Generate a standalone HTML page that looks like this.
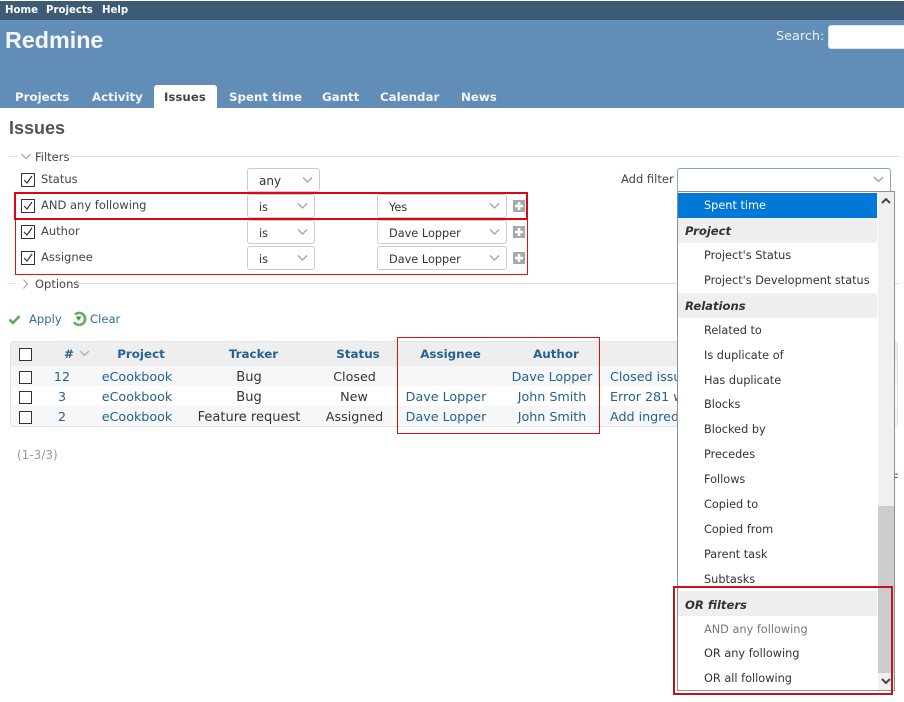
<!DOCTYPE html>
<html><head><meta charset="utf-8"><title>Redmine</title>
<style>
html,body{margin:0;padding:0;background:#fff}
body{width:904px;height:702px;overflow:hidden;position:relative;font-family:"DejaVu Sans","Liberation Sans",sans-serif;font-size:12px;color:#333}
#p{position:absolute;left:0;top:0;width:904px;height:702px;overflow:hidden}
#p div,#p span,#p svg{position:absolute}
.t{white-space:nowrap;line-height:20px;height:20px}
.c{transform:translateX(-50%)}
.tb{font-weight:bold;color:#f2f6fa;font-size:11.8px;top:87px}
.top{font-weight:bold;color:#fff;font-size:10.2px}
.lb{font-size:11.5px;color:#444}
.sel{box-sizing:border-box;border:1px solid #ccc;border-radius:3px;background:#fff;height:24px}
.v{font-size:11.3px;color:#333}
.l{font-size:12.7px;color:#26618f}
.n{font-size:13px;color:#333}
.h{font-size:11.9px;font-weight:bold;color:#26618f}
.cb{box-sizing:border-box;width:13px;height:13px;border:1px solid #333;background:#fff}
.m{font-size:11.3px;color:#333}
.g{font-size:11.6px;font-weight:bold;font-style:italic;color:#333;left:685px}
.gb{left:678px;width:199px;height:25px;background:#efefef}
</style></head><body><div id="p">

<div style="left:0;top:0;width:904px;height:108px;background:#628db6"></div>
<div style="left:0;top:0;width:904px;height:20px;background:#3e5b76"></div>
<div style="left:0;top:0;width:904px;height:1px;background:#fff"></div>
<span class="t top" style="left:5px;top:1px">Home</span>
<span class="t top" style="left:46px;top:1px">Projects</span>
<span class="t top" style="left:102px;top:1px">Help</span>
<span class="t" style="left:5px;top:29px;font:bold 23.300px/22px 'Liberation Sans',sans-serif;height:22px;color:#f4f8fb">Redmine</span>
<span class="t" style="left:776px;top:27px;font-size:12.800px;color:#e8eff5">Search:</span>
<div style="left:828px;top:25px;width:80px;height:24px;background:#fff;border-radius:3px;box-sizing:border-box;border:1px solid #d7e2ec"></div>

<div style="left:154px;top:85px;width:63px;height:23px;background:#fff;border-radius:3px 3px 0 0"></div>
<span class="t tb" style="left:15px">Projects</span>
<span class="t tb" style="left:92px">Activity</span>
<span class="t tb" style="left:164px;color:#444">Issues</span>
<span class="t tb" style="left:229px">Spent time</span>
<span class="t tb" style="left:322px">Gantt</span>
<span class="t tb" style="left:380px">Calendar</span>
<span class="t tb" style="left:461px">News</span>

<span class="t" style="left:9px;top:118px;font:bold 18px/20px 'Liberation Sans',sans-serif;color:#555">Issues</span>

<div style="left:9px;top:156px;width:890px;height:1px;background:#ddd"></div>
<div style="left:18px;top:150px;width:53px;height:14px;background:#fff"></div>
<svg style="left:21px;top:153px" width="10" height="7" viewBox="0 0 10 7"><path d="M.5 1l4.500 4.500L9.500 1" fill="none" stroke="#aaa" stroke-width="1.300"/></svg>
<span class="t lb" style="left:35px;top:147px">Filters</span>

<svg style="left:21px;top:173px" width="14" height="14" viewBox="0 0 14 14"><rect x=".5" y=".5" width="13" height="13" fill="#fff" stroke="#333"/><path d="M3 7l3 3 5-7" fill="none" stroke="#333" stroke-width="1.200"/></svg>
<svg style="left:21px;top:199px" width="14" height="14" viewBox="0 0 14 14"><rect x=".5" y=".5" width="13" height="13" fill="#fff" stroke="#333"/><path d="M3 7l3 3 5-7" fill="none" stroke="#333" stroke-width="1.200"/></svg>
<svg style="left:21px;top:225px" width="14" height="14" viewBox="0 0 14 14"><rect x=".5" y=".5" width="13" height="13" fill="#fff" stroke="#333"/><path d="M3 7l3 3 5-7" fill="none" stroke="#333" stroke-width="1.200"/></svg>
<svg style="left:21px;top:251px" width="14" height="14" viewBox="0 0 14 14"><rect x=".5" y=".5" width="13" height="13" fill="#fff" stroke="#333"/><path d="M3 7l3 3 5-7" fill="none" stroke="#333" stroke-width="1.200"/></svg>
<span class="t lb" style="left:41px;top:169px">Status</span>
<span class="t lb" style="left:41px;top:195px">AND any following</span>
<span class="t lb" style="left:41px;top:221px">Author</span>
<span class="t lb" style="left:41px;top:247px">Assignee</span>

<div class="sel" style="left:247px;top:168px;width:73px"></div>
<div class="sel" style="left:247px;top:194px;width:68px"></div>
<div class="sel" style="left:247px;top:220px;width:68px"></div>
<div class="sel" style="left:247px;top:246px;width:68px"></div>
<div class="sel" style="left:377px;top:194px;width:130px"></div>
<div class="sel" style="left:377px;top:220px;width:130px"></div>
<div class="sel" style="left:377px;top:246px;width:130px"></div>
<span class="t v" style="left:259px;top:171px;font-size:12px">any</span>
<span class="t v" style="left:259px;top:198px">is</span>
<span class="t v" style="left:259px;top:224px">is</span>
<span class="t v" style="left:259px;top:250px">is</span>
<span class="t v" style="left:389px;top:198px">Yes</span>
<span class="t v" style="left:389px;top:224px">Dave Lopper</span>
<span class="t v" style="left:389px;top:250px">Dave Lopper</span>
<svg style="left:0;top:0" width="904" height="300" viewBox="0 0 904 300"><path d="M303 177.500l4.500 4.500 4.500-4.500M298 203.500l4.500 4.500 4.500-4.500M298 229.500l4.500 4.500 4.500-4.500M298 255.500l4.500 4.500 4.500-4.500M490 203.500l4.500 4.500 4.500-4.500M490 229.500l4.500 4.500 4.500-4.500M490 255.500l4.500 4.500 4.500-4.500" fill="none" stroke="#a5a5a5" stroke-width="1.400"/></svg>

<svg style="left:513px;top:200px" width="12" height="12" viewBox="0 0 12 12"><rect width="12" height="12" fill="#a8a8a8"/><path d="M6 2v8M2 6h8" stroke="#fff" stroke-width="2.600"/></svg>
<svg style="left:513px;top:226px" width="12" height="12" viewBox="0 0 12 12"><rect width="12" height="12" fill="#a8a8a8"/><path d="M6 2v8M2 6h8" stroke="#fff" stroke-width="2.600"/></svg>
<svg style="left:513px;top:252px" width="12" height="12" viewBox="0 0 12 12"><rect width="12" height="12" fill="#a8a8a8"/><path d="M6 2v8M2 6h8" stroke="#fff" stroke-width="2.600"/></svg>

<div style="left:15px;top:192px;width:513px;height:83px;box-sizing:border-box;border:1px solid #dd1111"></div>
<div style="left:14px;top:192px;width:514px;height:28px;box-sizing:border-box;border:2px solid #dd0610"></div>

<div style="left:9px;top:283px;width:890px;height:1px;background:#ddd"></div>
<div style="left:16px;top:277px;width:62px;height:14px;background:#fff"></div>
<svg style="left:22px;top:279px" width="7" height="10" viewBox="0 0 7 10"><path d="M1.500.5l4 4.500-4 4.500" fill="none" stroke="#aaa" stroke-width="1.300"/></svg>
<span class="t lb" style="left:35px;top:274px">Options</span>

<svg style="left:8px;top:313px" width="13" height="13" viewBox="0 0 13 13"><path d="M1.500 6.500l3.500 3.500 6.500-7" fill="none" stroke="#5aa55a" stroke-width="2.400"/></svg>
<span class="t" style="left:29px;top:309px;font-size:11.600px;color:#2f6e98">Apply</span>
<svg style="left:71px;top:311px" width="16" height="16" viewBox="0 0 16 16"><path d="M4 3.500A6 6 0 1 1 3 11" fill="none" stroke="#63ad63" stroke-width="2.600"/><path d="M5 5.500h5.500L7.500 10z" fill="#3f8f3f"/></svg>
<span class="t" style="left:90px;top:309px;font-size:11.600px;color:#2f6e98">Clear</span>

<div style="left:10px;top:341px;width:888px;height:86px;box-sizing:border-box;border:1px solid #e4e4e4;border-radius:3px;background:#fff"></div>
<div style="left:11px;top:342px;width:886px;height:24px;background:#eee"></div>
<div style="left:11px;top:366px;width:886px;height:20px;background:#f6f7f8"></div>
<div style="left:11px;top:406px;width:886px;height:20px;background:#f6f7f8"></div>
<div class="cb" style="left:19px;top:348px"></div>
<div class="cb" style="left:19px;top:371px"></div>
<div class="cb" style="left:19px;top:391px"></div>
<div class="cb" style="left:19px;top:411px"></div>
<span class="t h" style="left:64px;top:344px">#</span>
<svg style="left:79px;top:350px" width="11" height="7" viewBox="0 0 11 7"><path d="M1 1l4.500 4.500L10 1" fill="none" stroke="#b5b5b5" stroke-width="1.500"/></svg>
<span class="t h c" style="left:141px;top:344px">Project</span>
<span class="t h c" style="left:253.500px;top:344px">Tracker</span>
<span class="t h c" style="left:358px;top:344px">Status</span>
<span class="t h c" style="left:450.500px;top:344px">Assignee</span>
<span class="t h c" style="left:556px;top:344px">Author</span>

<span class="t l c" style="left:62px;top:367px">12</span>
<span class="t l c" style="left:62px;top:387px">3</span>
<span class="t l c" style="left:62px;top:407px">2</span>
<span class="t l c" style="left:137px;top:367px">eCookbook</span>
<span class="t l c" style="left:137px;top:387px">eCookbook</span>
<span class="t l c" style="left:137px;top:407px">eCookbook</span>
<span class="t n c" style="left:249px;top:368px">Bug</span>
<span class="t n c" style="left:249px;top:388px">Bug</span>
<span class="t n c" style="left:249px;top:408px">Feature request</span>
<span class="t n c" style="left:354.500px;top:367px;font-size:12.700px">Closed</span>
<span class="t n c" style="left:354px;top:387px;font-size:12.700px">New</span>
<span class="t n c" style="left:354.500px;top:407px;font-size:12.700px">Assigned</span>
<span class="t l c" style="left:446px;top:387px">Dave Lopper</span>
<span class="t l c" style="left:446px;top:407px">Dave Lopper</span>
<span class="t l c" style="left:552px;top:367px">Dave Lopper</span>
<span class="t l c" style="left:552px;top:387px">John Smith</span>
<span class="t l c" style="left:552px;top:407px">John Smith</span>
<span class="t l" style="left:610px;top:367px">Closed issue</span>
<span class="t l" style="left:610px;top:387px">Error 281 when</span>
<span class="t l" style="left:610px;top:407px">Add ingredients</span>

<span class="t" style="left:17px;top:445px;font-size:12px;color:#999">(1-3/3)</span>
<span class="t" style="left:892px;top:468px;font-size:11.500px;color:#26618f">F</span>

<svg style="left:397px;top:337px" width="203" height="97" viewBox="0 0 203 97"><rect x=".5" y=".5" width="202" height="96" fill="none" stroke="#dd1111" stroke-width="1"/></svg>

<span class="t lb" style="left:621px;top:169px">Add filter</span>
<div style="left:677px;top:168px;width:214px;height:24px;box-sizing:border-box;border:1px solid #7fa9ca;border-radius:3px 3px 0 0;background:#fff"></div>
<svg style="left:873px;top:176px" width="11" height="8" viewBox="0 0 11 8"><path d="M1 1l4.500 4.500L10 1" fill="none" stroke="#a5a5a5" stroke-width="1.500"/></svg>

<div style="left:677px;top:191px;width:218px;height:500px;box-sizing:border-box;border:1px solid #8f8f8f;background:#fff"></div>
<div style="left:878px;top:192px;width:16px;height:498px;background:#f0f0f0"></div>
<div style="left:878px;top:506px;width:16px;height:167px;background:#cdcdcd"></div>
<svg style="left:878px;top:192px" width="16" height="17" viewBox="0 0 16 17"><path d="M4 11l4-4 4 4" fill="none" stroke="#444" stroke-width="2"/></svg>
<svg style="left:878px;top:673px" width="16" height="17" viewBox="0 0 16 17"><path d="M4 6l4 4 4-4" fill="none" stroke="#444" stroke-width="2"/></svg>
<div style="left:678px;top:193px;width:199px;height:25px;background:#0078d7"></div>
<div class="gb" style="top:218px"></div>
<div class="gb" style="top:293px"></div>
<div class="gb" style="top:591px"></div>
<span class="t m" style="left:704px;top:196px;color:#fff">Spent time</span>
<span class="t g" style="top:221px">Project</span>
<span class="t m" style="left:704px;top:246px">Project's Status</span>
<span class="t m" style="left:704px;top:271px">Project's Development status</span>
<span class="t g" style="top:296px">Relations</span>
<span class="t m" style="left:704px;top:321px">Related to</span>
<span class="t m" style="left:704px;top:346px">Is duplicate of</span>
<span class="t m" style="left:704px;top:371px">Has duplicate</span>
<span class="t m" style="left:704px;top:395px">Blocks</span>
<span class="t m" style="left:704px;top:420px">Blocked by</span>
<span class="t m" style="left:704px;top:445px">Precedes</span>
<span class="t m" style="left:704px;top:470px">Follows</span>
<span class="t m" style="left:704px;top:495px">Copied to</span>
<span class="t m" style="left:704px;top:520px">Copied from</span>
<span class="t m" style="left:704px;top:545px">Parent task</span>
<span class="t m" style="left:704px;top:570px">Subtasks</span>
<span class="t g" style="top:595px">OR filters</span>
<span class="t m" style="left:704px;top:620px;color:#777">AND any following</span>
<span class="t m" style="left:704px;top:644px">OR any following</span>
<span class="t m" style="left:704px;top:669px">OR all following</span>

<div style="left:673px;top:586px;width:220px;height:109px;box-sizing:border-box;border:2px solid #c0151b"></div>
</div></body></html>
